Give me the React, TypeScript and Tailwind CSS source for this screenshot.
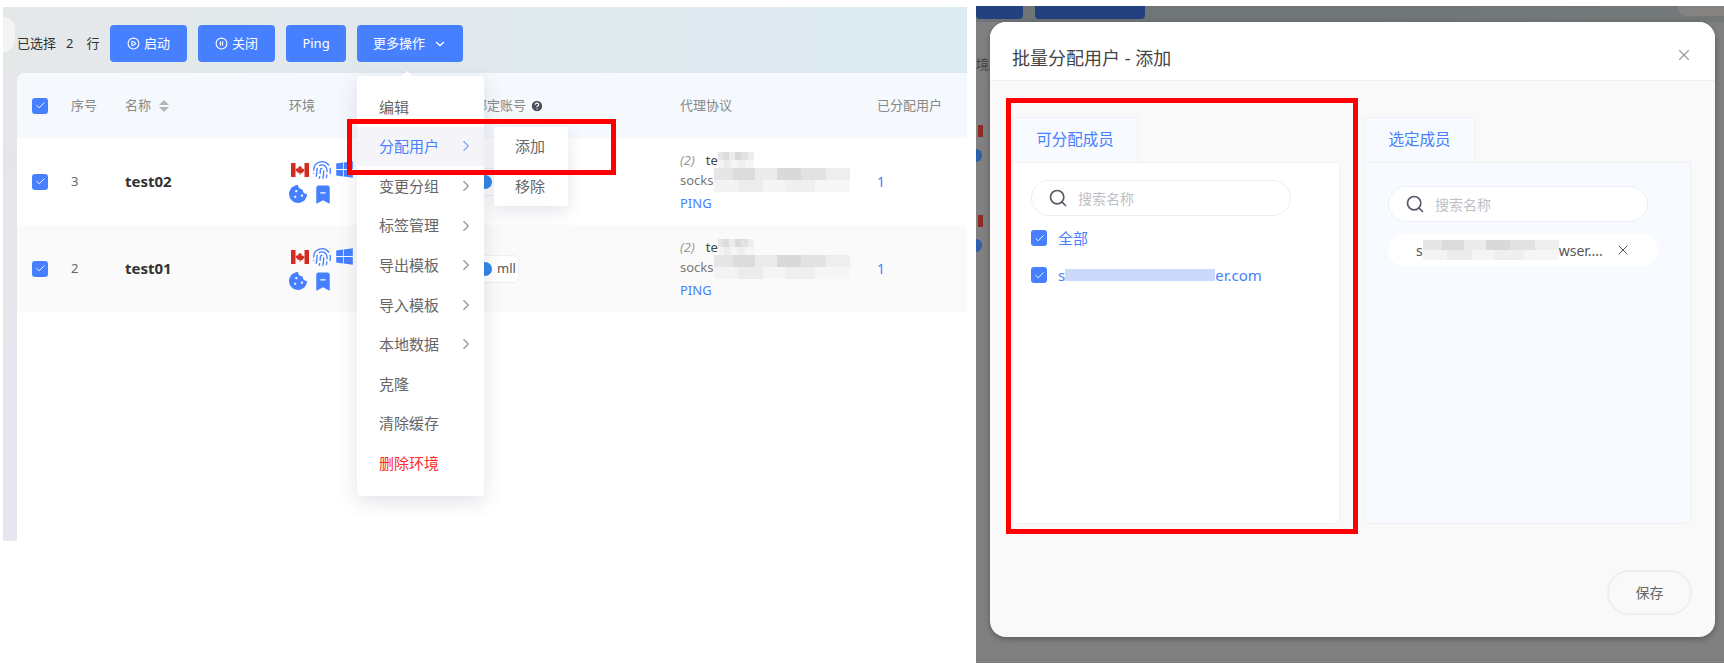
import { Check, ChevronDown, ChevronRight, CirclePause, CirclePlay, CircleHelp, Fingerprint, Search, X } from "lucide-react";
import { FaCookieBite, FaWindows } from "react-icons/fa";
import { BsBookmarkDashFill } from "react-icons/bs";

const rowGrid = "grid grid-cols-[54px_54px_164px_185px_206px_197px_90px] items-center";

const menuItems = [
  { label: "编辑" },
  { label: "分配用户", sub: true, active: true },
  { label: "变更分组", sub: true },
  { label: "标签管理", sub: true },
  { label: "导出模板", sub: true },
  { label: "导入模板", sub: true },
  { label: "本地数据", sub: true },
  { label: "克隆" },
  { label: "清除缓存" },
  { label: "删除环境", danger: true },
];

const Box = () => (
  <span className="flex h-4 w-4 shrink-0 items-center justify-center rounded-[3px] bg-[#4680ff]">
    <Check className="h-[11px] w-[11px] text-white" strokeWidth={2} />
  </span>
);

const CanadaFlag = () => (
  <svg viewBox="0 0 18 14" className="h-[14px] w-[18px]">
    <rect width="18" height="14" fill="#fff" />
    <rect width="4.5" height="14" fill="#d52b1e" />
    <rect x="13.5" width="4.5" height="14" fill="#d52b1e" />
    <path d="M9 2.5l1 1.8 1-.5-.4 2.4 1.3-.9.4.9 1.2-.2-.4 1.4.5.4-2.2 1.7.2.9-2.1-.3V12h-.9l.0-2.3-2.1.3.2-.9-2.2-1.7.5-.4-.4-1.4 1.2.2.4-.9 1.3.9-.4-2.4 1 .5z" fill="#d52b1e" />
  </svg>
);

const EnvIcons = () => (
  <div className="flex w-[66px] flex-col gap-[5px] text-[#4680ff]">
    <div className="flex items-center gap-[3px] pl-[2px]">
      <CanadaFlag />
      <Fingerprint className="h-[20px] w-[20px]" strokeWidth={1.6} />
      <FaWindows className="h-[19px] w-[19px]" />
    </div>
    <div className="flex items-center gap-[7px]">
      <FaCookieBite className="h-[18px] w-[18px]" />
      <BsBookmarkDashFill className="h-[19px] w-[18px]" />
    </div>
  </div>
);

// pixelated blur that hides a value in the screenshot
const Mosaic = ({ className }: { className: string }) => (
  <span className={`flex flex-col ${className}`}>
    <span className="flex-1 bg-[linear-gradient(90deg,#e6e6e6_0_14%,#dcdcdc_14%_30%,#ebebeb_30%_46%,#d9d9d9_46%_64%,#e2e2e2_64%_82%,#eeeeee_82%)]" />
    <span className="flex-1 bg-[linear-gradient(90deg,#f3f3f3_0_18%,#ececec_18%_36%,#f5f5f5_36%_52%,#efefef_52%_74%,#f6f6f6_74%)]" />
  </span>
);

const SearchBox = ({ className }: { className: string }) => (
  <div className={`flex h-9 items-center rounded-full border border-[#ececf4] bg-white pl-[16px] ${className}`}>
    <Search className="h-[20px] w-[20px] text-[#555b68]" strokeWidth={2} />
    <span className="ml-[10px] text-[14px] text-[#bdbfc6]">搜索名称</span>
  </div>
);

const TableRow = ({ no, name, shaded, chip }: { no: string; name: string; shaded?: boolean; chip?: boolean }) => (
  <div className={`${rowGrid} h-[87px] ${shaded ? "bg-[#fafafa]" : "bg-white"}`}>
    <div className="pl-[15px]">
      <Box />
    </div>
    <span className="text-[13px] text-[#666]">{no}</span>
    <span className="text-[15px] font-bold text-[#333]">{name}</span>
    <EnvIcons />
    <div>
      <span className="ml-[1px] inline-flex h-[28px] w-[44px] items-center gap-[5px] rounded-md border border-[#eeeef6] bg-white pl-[2px]">
        <span className="h-[14px] w-[14px] rounded-full bg-[#2f86e8]" />
        {chip && <span className="text-[13px] text-[#555]">mll</span>}
      </span>
    </div>
    <div className="flex flex-col text-[13px] leading-[18px] text-[#777]">
      <div className="flex h-[18px] items-center">
        <span className="italic text-[#999]">(2)</span>
        <span className="ml-[11px] text-[#444]">te</span>
        <Mosaic className="h-[16px] w-[36px]" />
      </div>
      <div className="mt-[2px] flex h-[18px] items-center">
        <span>socks</span>
        <Mosaic className="h-[24px] w-[136px]" />
      </div>
      <span className="mt-[5px] text-[#4680ff]">PING</span>
    </div>
    <span className="text-[14px] text-[#4680ff]">1</span>
  </div>
);

export default function App() {
  return (
    <div className="flex h-[667px] w-[1724px] overflow-hidden bg-white font-['Noto_Sans','Noto_Sans_CJK_SC',sans-serif]">
      {/* Left shot: table with the dropdown open */}
      <section className="relative ml-[3px] mt-[7px] flex h-[534px] w-[964px] flex-col bg-[linear-gradient(180deg,#e4e7e8,#e8e4f0)]">
        <div className="absolute left-0 top-[10px] h-[35px] w-[12px] rounded-r-full bg-[#f4f4f6]" />
        <div className="flex h-[66px] items-center bg-[linear-gradient(90deg,#e5e8e9,#dceaf2)] pl-[14px] pt-[7px]">
          <span className="flex w-[93px] gap-[10px] text-[13px] text-[#333]">
            <span>已选择</span>
            <span>2</span>
            <span className="ml-[3px]">行</span>
          </span>
          <div className="flex gap-[11px] text-[13px] text-white">
            <button className="flex h-[37px] w-[77px] items-center justify-center gap-1 rounded bg-[#4680ff]">
              <CirclePlay className="h-[13px] w-[13px]" />
              启动
            </button>
            <button className="flex h-[37px] w-[77px] items-center justify-center gap-1 rounded bg-[#4680ff]">
              <CirclePause className="h-[13px] w-[13px]" />
              关闭
            </button>
            <button className="h-[37px] w-[60px] rounded bg-[#4680ff]">Ping</button>
            <button className="flex h-[37px] w-[106px] items-center justify-center gap-2 rounded bg-[#4680ff]">
              更多操作
              <ChevronDown className="h-[14px] w-[14px]" />
            </button>
          </div>
        </div>
        <div className="ml-[14px] flex-1 overflow-hidden rounded-tl-lg bg-white">
          <div className={`${rowGrid} h-[65px] bg-[#f5f9fd] text-[13px] text-[#888]`}>
            <div className="pl-[15px]">
              <Box />
            </div>
            <span>序号</span>
            <span className="flex items-center gap-[8px]">
              名称
              <span className="flex flex-col gap-[2px]">
                <span className="h-0 w-0 border-x-[5px] border-b-[5px] border-x-transparent border-b-[#b5b5b5]" />
                <span className="h-0 w-0 border-x-[5px] border-t-[5px] border-x-transparent border-t-[#b5b5b5]" />
              </span>
            </span>
            <span>环境</span>
            <span className="flex items-center gap-1">
              绑定账号
              <CircleHelp className="h-[14px] w-[14px] fill-[#4a5060] text-white" />
            </span>
            <span>代理协议</span>
            <span>已分配用户</span>
          </div>
          <TableRow no="3" name="test02" />
          <TableRow no="2" name="test01" shaded chip />
        </div>

        {/* Dropdown */}
        <div className="absolute left-[354px] top-[69px] w-[127px] rounded bg-white pb-[13px] pt-[11px] shadow-[0_6px_20px_rgba(80,80,120,0.16)]">
          <span className="absolute -top-[5px] left-[44px] h-0 w-0 border-x-[6px] border-b-[6px] border-x-transparent border-b-white" />
          {menuItems.map((item) => (
            <div
              key={item.label}
              className={`flex h-[39.6px] items-center justify-between pl-[22px] pr-[9px] text-[15px] ${
                item.active ? "bg-[#f5f5f9] text-[#4680ff]" : item.danger ? "text-[#ff2a2a]" : "text-[#666]"
              }`}
            >
              {item.label}
              {item.sub && <ChevronRight className="h-[18px] w-[18px] opacity-70" strokeWidth={1.5} />}
            </div>
          ))}
        </div>
        <div className="absolute left-[491px] top-[120px] flex w-[74px] flex-col bg-white pr-[2px] text-center text-[15px] text-[#666] shadow-[0_6px_16px_rgba(80,80,120,0.14)]">
          <span className="leading-[39.6px]">添加</span>
          <span className="leading-[39.6px]">移除</span>
        </div>
        <div className="absolute left-[344px] top-[112px] h-[56px] w-[269px] border-[5px] border-[#ff0000]" />
      </section>

      {/* Right shot: dimmed page with the modal */}
      <section className="relative ml-[9px] mt-[6px] h-[657px] flex-1 bg-[#808080]">
        <div className="h-[16px] bg-[linear-gradient(90deg,#6f7577,#737879)]" />
        <div className="absolute left-0 top-0 h-[13px] w-[47px] rounded-b bg-[#23407f]" />
        <div className="absolute left-[59px] top-0 h-[13px] w-[110px] rounded-b bg-[#23407f]" />
        <div className="absolute right-0 top-0 h-[10px] w-[46px] rounded-bl-lg bg-[#858382]" />
        <span className="absolute left-0 top-[49px] text-[13px] text-[#444]">境</span>
        <div className="absolute left-[2px] top-[119px] h-[12px] w-[5px] bg-[#8c2a22]" />
        <div className="absolute left-0 top-[143px] h-[13px] w-[6px] rounded-r-full bg-[#2f5fa8]" />
        <div className="absolute left-[2px] top-[209px] h-[12px] w-[5px] bg-[#8c2a22]" />
        <div className="absolute left-0 top-[233px] h-[13px] w-[6px] rounded-r-full bg-[#2f5fa8]" />

        <div className="absolute left-[14px] top-[16px] flex h-[615px] w-[725px] flex-col overflow-hidden rounded-[16px] bg-[#f9f9f9] shadow-[0_2px_6px_rgba(0,0,0,0.3)]">
          <header className="flex h-[59px] items-start justify-between border-b border-[#eee] bg-white pl-[22px] pr-[22px]">
            <h2 className="mt-[23px] text-[18px] text-[#444]">批量分配用户 - 添加</h2>
            <X className="mt-[24px] h-[18px] w-[18px] text-[#999]" strokeWidth={1.5} />
          </header>
          <div className="flex gap-[24px] pl-[22px] pt-[36px]">
            <div className="w-[328px]">
              <div className="flex h-[45px] w-[126px] items-center justify-center border border-b-0 border-[#eef0f4] bg-[#f7fafe] text-[15.5px] text-[#4680ff]">
                可分配成员
              </div>
              <div className="h-[362px] rounded-b-md border border-[#f0f0f0] bg-white px-[18px] pt-[17px]">
                <SearchBox className="w-[260px]" />
                <label className="mt-[14px] flex h-4 items-center gap-[11px] text-[15px] text-[#4680ff]">
                  <Box />
                  全部
                </label>
                <label className="mt-[21px] flex h-4 items-center gap-[11px] text-[15px] text-[#4680ff]">
                  <Box />
                  <span className="flex items-center">
                    s
                    <span className="inline-block h-[12px] w-[150px] bg-[#cdd9fb]" />
                    er.com
                  </span>
                </label>
              </div>
            </div>
            <div className="w-[327px]">
              <div className="flex h-[45px] w-[111px] items-center justify-center border border-b-0 border-[#eef0f4] bg-[#f7fafe] text-[15.5px] text-[#4680ff]">
                选定成员
              </div>
              <div className="h-[362px] rounded-b-md border border-[#f0f0f0] bg-[#f7fafe] pl-[23px] pt-[23px]">
                <SearchBox className="w-[260px]" />
                <div className="mt-[12px] flex h-[32px] w-[270px] items-center rounded-full bg-white pl-[28px] text-[14px] text-[#555]">
                  s
                  <Mosaic className="h-[20px] w-[136px]" />
                  wser....
                  <X className="ml-[12px] h-[16px] w-[16px]" strokeWidth={1.5} />
                </div>
              </div>
            </div>
          </div>
          <div className="mt-[46px] flex justify-end pr-[23px]">
            <button className="h-[45px] w-[85px] rounded-[22px] border-2 border-[#eeeeee] bg-[#f9f9f9] text-[14px] text-[#666]">
              保存
            </button>
          </div>
        </div>
        <div className="absolute left-[30px] top-[92px] h-[436px] w-[352px] border-[5px] border-[#ff0000]" />
      </section>
    </div>
  );
}
